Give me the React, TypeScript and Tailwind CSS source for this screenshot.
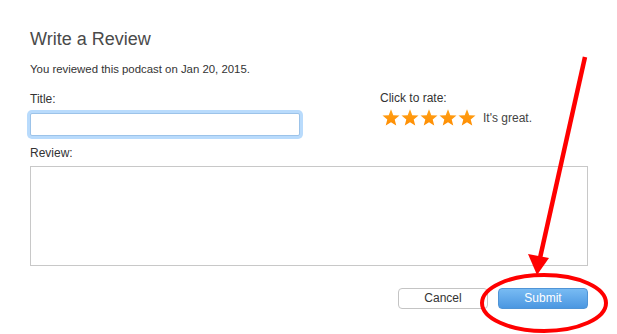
import React from "react";

const Star = () => (
  <svg width="18" height="17" viewBox="0 0 24 23" className="block">
    <defs>
      <linearGradient id="starFill" x1="0" y1="0" x2="0" y2="1">
        <stop offset="0%" stopColor="#ffa31a" />
        <stop offset="100%" stopColor="#ff8c00" />
      </linearGradient>
    </defs>
    <polygon
      points="12,0.5 15.1,8.3 23.5,8.8 17,14.1 19.1,22.3 12,17.8 4.9,22.3 7,14.1 0.5,8.8 8.9,8.3"
      fill="url(#starFill)"
    />
  </svg>
);

export default function App() {
  return (
    <div
      className="relative w-[617px] h-[334px] overflow-hidden bg-white text-[#333]"
      style={{ fontFamily: '"Liberation Sans", Arial, sans-serif' }}
    >
      <div className="pl-[30px] pr-[29px] pt-[28px]">
        <h1 className="text-[18px] leading-[22px] text-[#4a4a4a]">Write a Review</h1>
        <p className="mt-[12px] text-[11.4px] leading-[14px] text-[#333]">
          You reviewed this podcast on Jan 20, 2015.
        </p>

        <div className="mt-[16px] flex">
          <div className="w-[350px]">
            <label className="block text-[12px] leading-[15px]">Title:</label>
            <input
              type="text"
              className="mt-[6px] block w-[270px] h-[23px] border border-[#9cc3e9] bg-white outline-none ring-[3px] ring-[#b9dbfc] rounded-[2px]"
            />
          </div>
          <div>
            <div className="text-[12px] leading-[15px] -mt-[1px]">Click to rate:</div>
            <div className="mt-[3px] flex items-center">
              <div className="flex gap-[1px] ml-[2px]">
                <Star />
                <Star />
                <Star />
                <Star />
                <Star />
              </div>
              <span className="ml-[7px] text-[12px] leading-[14px] text-[#444]">It's great.</span>
            </div>
          </div>
        </div>

        <label className="mt-[10px] block text-[12px] leading-[15px]">Review:</label>
        <textarea className="mt-[5px] block w-[558px] h-[100px] resize-none border border-[#c8c8c8] bg-white outline-none" />

        <div className="mt-[22px] flex justify-end gap-[10px]">
          <button className="w-[90px] h-[21px] rounded-[4px] border border-[#c4c4c4] bg-white text-[12px] leading-[19px] text-[#333]">
            Cancel
          </button>
          <button className="w-[90px] h-[21px] rounded-[4px] border border-[#4f94d6] bg-gradient-to-b from-[#78bbf3] to-[#4b97e1] text-[12px] leading-[19px] text-white">
            Submit
          </button>
        </div>
      </div>

      {/* annotation overlay */}
      <svg className="absolute left-0 top-0 pointer-events-none" width="617" height="334">
        <line x1="585" y1="57" x2="540" y2="258" stroke="#ff0000" strokeWidth="4.5" />
        <polygon points="528,254 549,258 537,275" fill="#ff0000" />
        <ellipse cx="544" cy="303" rx="62" ry="28" fill="none" stroke="#ff0000" strokeWidth="4" />
      </svg>
    </div>
  );
}
